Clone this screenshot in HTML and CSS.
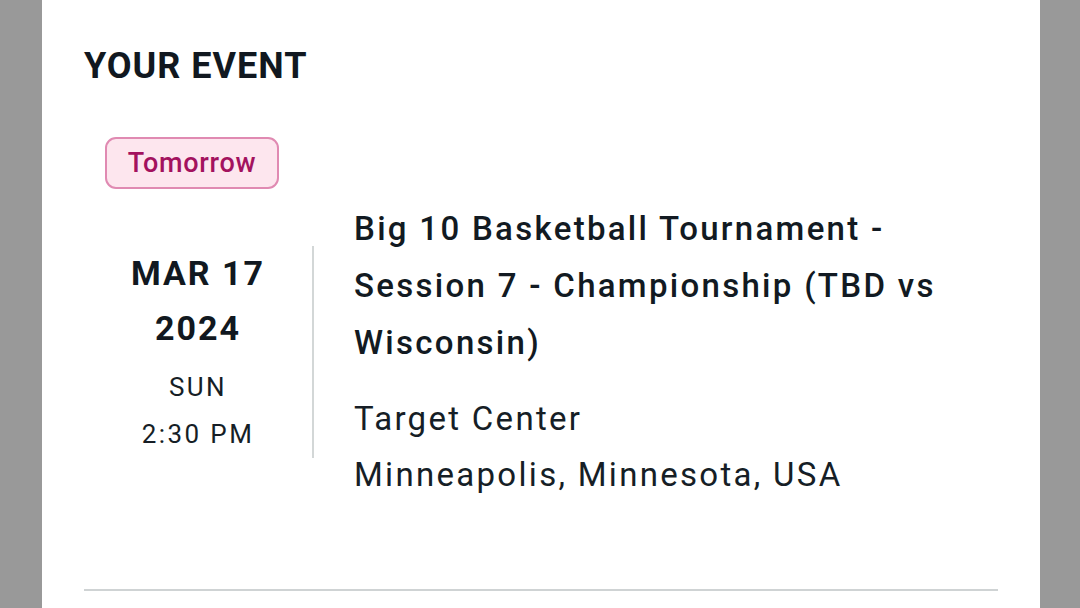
FILE: index.html
```html
<!DOCTYPE html>
<html>
<head>
<meta charset="utf-8">
<link rel="stylesheet" href="styles.css">
</head>
<body>
<div class="card">
  <h2 class="heading">YOUR EVENT</h2>
  <div class="badge-row"><span class="badge">Tomorrow</span></div>
  <div class="event">
    <div class="date">
      <div class="date-big">MAR 17</div>
      <div class="date-big">2024</div>
      <div class="date-small first">SUN</div>
      <div class="date-small">2:30 PM</div>
    </div>
    <div class="info">
      <div class="title">Big 10 Basketball Tournament - Session 7 - Championship (TBD vs Wisconsin)</div>
      <div class="venue">Target Center<br>Minneapolis, Minnesota, USA</div>
    </div>
  </div>
  <div class="rule"></div>
</div>
</body>
</html>
```

FILE: styles.css
```css
html, body {
  margin: 0;
  padding: 0;
  background: #999999;
  height: 608px;
  overflow: hidden;
}
body {
  font-family: Roboto, "Noto Sans", sans-serif;
  color: #121a22;
}
.card {
  margin: 0 40px 0 42px;
  background: #ffffff;
  height: 608px;
  padding: 45px 42px 0 42px;
  box-sizing: border-box;
}
.heading {
  margin: 0;
  font-size: 36px;
  line-height: 43px;
  font-weight: 700;
  letter-spacing: 1px;
  color: #111820;
}
.badge-row {
  margin-top: 49px;
  padding-left: 21px;
  display: flex;
}
.badge {
  display: flex;
  align-items: center;
  justify-content: center;
  width: 174px;
  height: 52px;
  box-sizing: border-box;
  border: 2px solid #e08ab2;
  border-radius: 11px;
  background: #fde6ee;
  color: #a3125e;
  font-size: 27px;
  font-weight: 500;
  letter-spacing: 0.7px;
}
.event {
  margin-top: 11px;
  display: flex;
  align-items: center;
}
.date {
  width: 228px;
  flex: none;
  border-right: 2px solid #d3d7d7;
  text-align: center;
}
.date-big {
  font-size: 34px;
  line-height: 55px;
  font-weight: 700;
  letter-spacing: 2px;
  color: #111820;
}
.date-small {
  font-size: 26px;
  line-height: 47px;
  font-weight: 400;
  letter-spacing: 2.4px;
  color: #161e26;
}
.date-small.first {
  margin-top: 8px;
}
.info {
  padding-left: 40px;
  flex: 1;
}
.title {
  font-size: 33px;
  line-height: 57px;
  font-weight: 500;
  letter-spacing: 2.3px;
  color: #121a22;
}
.venue {
  margin-top: 20px;
  font-size: 33px;
  line-height: 56px;
  font-weight: 400;
  letter-spacing: 2.3px;
  color: #161e26;
}
.rule {
  margin-top: 86px;
  height: 2px;
  background: #cfd3d4;
}
```
